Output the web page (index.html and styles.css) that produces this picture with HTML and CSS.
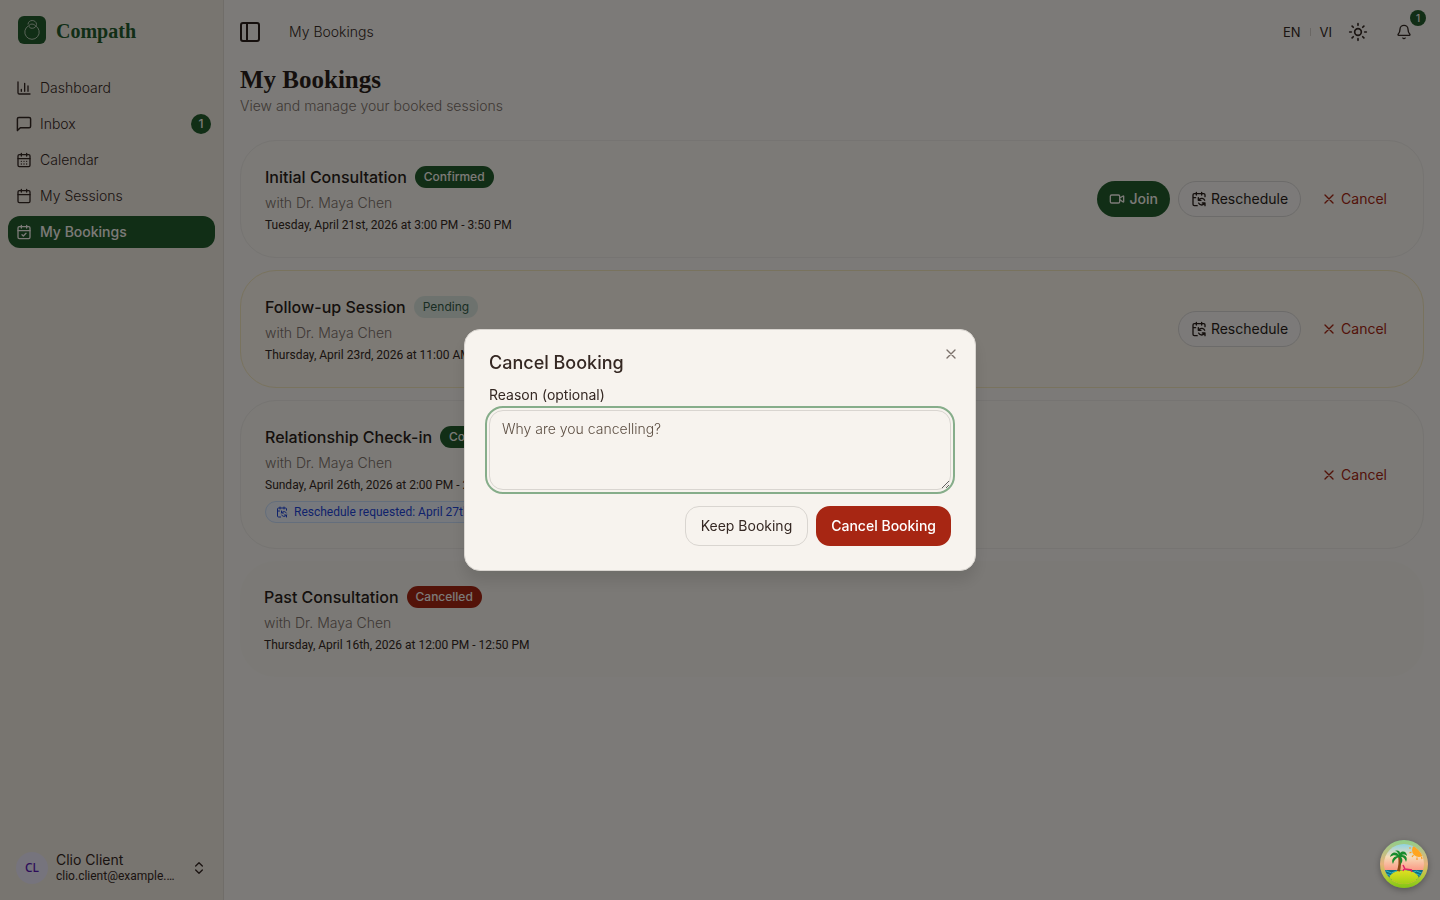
FILE: index.html
```html
<!DOCTYPE html>
<html lang="en">
<head>
    <meta charset="UTF-8">
    <meta name="viewport" content="width=device-width, initial-scale=1.0">
    <title>My Bookings - Compath</title>
    <link rel="stylesheet" href="styles.css">
</head>
<body>
    <!-- icon set -->
    <svg class="sprite" aria-hidden="true">
        <symbol id="i-chart" viewBox="0 0 24 24"><path d="M3 3v16a2 2 0 0 0 2 2h16M18 17V9M13 17V5M8 17v-3"/></symbol>
        <symbol id="i-message" viewBox="0 0 24 24"><path d="M21 15a2 2 0 0 1-2 2H7l-4 4V5a2 2 0 0 1 2-2h14a2 2 0 0 1 2 2z" transform="translate(-1.2 -1.2) scale(1.1)"/></symbol>
        <symbol id="i-calendar" viewBox="0 0 24 24"><path d="M8 2v4M16 2v4M3 10h18"/><rect x="3" y="4" width="18" height="18" rx="2"/></symbol>
        <symbol id="i-calendar-days" viewBox="0 0 24 24"><path d="M8 2v4M16 2v4M3 10h18M8 14h.01M12 14h.01M16 14h.01M8 18h.01M12 18h.01M16 18h.01"/><rect x="3" y="4" width="18" height="18" rx="2"/></symbol>
        <symbol id="i-calendar-check" viewBox="0 0 24 24"><path d="M8 2v4M16 2v4M3 10h18M9 16l2 2 4-4"/><rect x="3" y="4" width="18" height="18" rx="2"/></symbol>
        <symbol id="i-calendar-sync" viewBox="0 0 24 24"><path d="M11 10v4h4M11 14l1.535-1.605a5 5 0 0 1 8 1.5M16 2v4M21 18l-1.535 1.605a5 5 0 0 1-8-1.5M21 22v-4h-4M21 8.5V6a2 2 0 0 0-2-2H5a2 2 0 0 0-2 2v14a2 2 0 0 0 2 2h4.3M3 10h4M8 2v4"/></symbol>
        <symbol id="i-panel" viewBox="0 0 24 24"><rect x="3" y="3" width="18" height="18" rx="2"/><path d="M9 3v18"/></symbol>
        <symbol id="i-video" viewBox="0 0 24 24"><path d="m16 13 5.223 3.482a.5.5 0 0 0 .777-.416V7.87a.5.5 0 0 0-.752-.432L16 10.5"/><rect x="2" y="6" width="14" height="12" rx="2"/></symbol>
        <symbol id="i-x" viewBox="0 0 24 24"><path d="M18 6 6 18M6 6l12 12"/></symbol>
        <symbol id="i-sun" viewBox="0 0 24 24"><circle cx="12" cy="12" r="4"/><path d="M12 2v2M12 20v2M4.93 4.93l1.41 1.41M17.66 17.66l1.41 1.41M2 12h2M20 12h2M6.34 17.66l-1.41 1.41M19.07 4.93l-1.41 1.41"/></symbol>
        <symbol id="i-bell" viewBox="0 0 24 24"><path d="M10.268 21a2 2 0 0 0 3.464 0M3.262 15.326A1 1 0 0 0 4 17h16a1 1 0 0 0 .74-1.673C19.41 13.956 18 12.499 18 8A6 6 0 0 0 6 8c0 4.499-1.411 5.956-2.738 7.326"/></symbol>
        <symbol id="i-chevrons" viewBox="0 0 24 24"><path d="m7 15 5 5 5-5M7 9l5-5 5 5"/></symbol>
    </svg>

    <div class="layout">
        <aside class="sidebar">
            <a class="brand" href="#">
                <svg class="brand-logo" viewBox="0 0 28 28" aria-hidden="true">
                    <rect width="28" height="28" rx="6"/>
                    <path d="M10.500 9.800a7.200 7.200 0 1 0 7 0"/>
                    <path d="M10 8.500c0-2.500 2-4 4.200-4s4.300 1.500 4.300 3.800-2 4-4.300 4c-2 0-3.200-1-3.200-2.200 0-1.300 1.300-2 3-2 1.600 0 2.700.6 3.500 1.700"/>
                </svg>
                <span>Compath</span>
            </a>
            <nav class="menu">
                <a href="#"><svg class="icon"><use href="#i-chart"/></svg>Dashboard</a>
                <a href="#"><svg class="icon"><use href="#i-message"/></svg>Inbox<span class="count">1</span></a>
                <a href="#"><svg class="icon"><use href="#i-calendar-days"/></svg>Calendar</a>
                <a href="#"><svg class="icon"><use href="#i-calendar"/></svg>My Sessions</a>
                <a href="#" class="active"><svg class="icon"><use href="#i-calendar-check"/></svg>My Bookings</a>
            </nav>
            <button class="user" type="button">
                <span class="avatar">CL</span>
                <span class="user-info">
                    <span class="user-name">Clio Client</span>
                    <span class="user-email">clio.client@example.com</span>
                </span>
                <svg class="icon"><use href="#i-chevrons"/></svg>
            </button>
        </aside>

        <main class="main">
            <header class="topbar">
                <button class="toggle" type="button" aria-label="Toggle sidebar"><svg class="icon icon-lg"><use href="#i-panel"/></svg></button>
                <span class="crumb">My Bookings</span>
                <div class="tools">
                    <div class="langs">
                        <button type="button">EN</button>
                        <span class="divider"></span>
                        <button type="button">VI</button>
                    </div>
                    <button class="tool" type="button" aria-label="Theme"><svg class="icon icon-md"><use href="#i-sun"/></svg></button>
                    <button class="tool bell" type="button" aria-label="Notifications"><svg class="icon"><use href="#i-bell"/></svg><span class="bell-count">1</span></button>
                </div>
            </header>

            <h1>My Bookings</h1>
            <p class="subtitle">View and manage your booked sessions</p>

            <div class="bookings">
                <article class="card">
                    <div class="info">
                        <h2>Initial Consultation <span class="badge confirmed">Confirmed</span></h2>
                        <p class="with">with Dr. Maya Chen</p>
                        <p class="date">Tuesday, April 21st, 2026 at 3:00 PM - 3:50 PM</p>
                    </div>
                    <div class="actions">
                        <button class="btn join" type="button"><svg class="icon"><use href="#i-video"/></svg>Join</button>
                        <button class="btn outline" type="button"><svg class="icon"><use href="#i-calendar-sync"/></svg>Reschedule</button>
                        <button class="btn cancel" type="button"><svg class="icon"><use href="#i-x"/></svg>Cancel</button>
                    </div>
                </article>

                <article class="card is-pending">
                    <div class="info">
                        <h2>Follow-up Session <span class="badge pending">Pending</span></h2>
                        <p class="with">with Dr. Maya Chen</p>
                        <p class="date">Thursday, April 23rd, 2026 at 11:00 AM - 11:50 AM</p>
                    </div>
                    <div class="actions">
                        <button class="btn outline" type="button"><svg class="icon"><use href="#i-calendar-sync"/></svg>Reschedule</button>
                        <button class="btn cancel" type="button"><svg class="icon"><use href="#i-x"/></svg>Cancel</button>
                    </div>
                </article>

                <article class="card">
                    <div class="info">
                        <h2>Relationship Check-in <span class="badge confirmed">Confirmed</span></h2>
                        <p class="with">with Dr. Maya Chen</p>
                        <p class="date">Sunday, April 26th, 2026 at 2:00 PM - 2:50 PM</p>
                        <p class="request"><svg class="icon icon-sm"><use href="#i-calendar-sync"/></svg>Reschedule requested: April 27th</p>
                    </div>
                    <div class="actions">
                        <button class="btn cancel" type="button"><svg class="icon"><use href="#i-x"/></svg>Cancel</button>
                    </div>
                </article>

                <article class="card is-past">
                    <div class="info">
                        <h2>Past Consultation <span class="badge cancelled">Cancelled</span></h2>
                        <p class="with">with Dr. Maya Chen</p>
                        <p class="date">Thursday, April 16th, 2026 at 12:00 PM - 12:50 PM</p>
                    </div>
                </article>
            </div>
        </main>
    </div>

    <div class="overlay">
        <form class="dialog" role="dialog" aria-labelledby="dialog-title">
            <h2 id="dialog-title">Cancel Booking</h2>
            <button class="close" type="button" aria-label="Close"><svg class="icon"><use href="#i-x"/></svg></button>
            <div class="field">
                <label for="reason">Reason (optional)</label>
                <textarea id="reason" name="reason" placeholder="Why are you cancelling?"></textarea>
            </div>
            <div class="dialog-actions">
                <button class="keep" type="button">Keep Booking</button>
                <button class="confirm" type="submit">Cancel Booking</button>
            </div>
        </form>
    </div>

    <button class="island" type="button" aria-label="Open devtools">
        <svg viewBox="0 0 48 48" aria-hidden="true">
            <defs>
                <linearGradient id="rim" x1="0" y1="0" x2="0" y2="1">
                    <stop offset="0" stop-color="#8fcf8a"/>
                    <stop offset=".5" stop-color="#e8b27c"/>
                    <stop offset=".8" stop-color="#a9cf2a"/>
                    <stop offset="1" stop-color="#84c414"/>
                </linearGradient>
                <linearGradient id="sky" x1="0" y1="0" x2="0" y2="1">
                    <stop offset="0" stop-color="#6fd0ee"/>
                    <stop offset=".35" stop-color="#f6dcb8"/>
                    <stop offset=".7" stop-color="#fb8a78"/>
                </linearGradient>
                <linearGradient id="sand" x1="0" y1="0" x2="0" y2="1">
                    <stop offset="0" stop-color="#e2e022"/>
                    <stop offset="1" stop-color="#8ecb12"/>
                </linearGradient>
                <clipPath id="scene"><circle cx="24" cy="24" r="20"/></clipPath>
            </defs>
            <circle cx="24" cy="24" r="24" fill="url(#rim)"/>
            <g clip-path="url(#scene)">
                <rect width="48" height="48" fill="url(#sky)"/>
                <circle cx="39" cy="10" r="7" fill="#ffa51f"/>
                <path d="M29 8h2M29.500 13l2-1M32 17l1.500-2M37 20v-2.500M42 19l-.5-2" stroke="#ff9c1a" stroke-width="1.200"/>
                <path d="M4 30h40v10H4z" fill="#0c6f86"/>
                <path d="M4 32q2.500-2 5 0t5 0 5 0 5 0 5 0 5 0 5 0 5 0M4 35q2.500-2 5 0t5 0 5 0 5 0 5 0 5 0 5 0 5 0" fill="none" stroke="#33b6c4"/>
                <ellipse cx="24" cy="39" rx="15" ry="9" fill="url(#sand)"/>
                <path d="M17 31c1.500-5 2-9 1-15l2.500-.5c1 6 .5 11-.5 16z" fill="#8a4a16"/>
                <path d="M19 15c-3-4-8-3-9 2 3-2 5-2 7-1-4 1-6 4-4 8 1-4 3-6 6-7 1 2 2 5 1 8 3-3 3-6 1-8 3 0 4 2 5 5 2-4 0-7-4-7 2-1 4 0 5 1 0-4-4-6-7-3 0-2-2-3-5-2 2 0 3 2 4 4z" fill="#178b2c"/>
                <path d="M23 25l2 4 7 1M24 29l-1 2M31 30l1 2" fill="none" stroke="#e02468" stroke-width="1.500"/>
            </g>
        </svg>
    </button>
</body>
</html>
```

FILE: styles.css
```css
* {
    box-sizing: border-box;
}

body {
    margin: 0;
    font-family: Inter, "Liberation Sans", sans-serif;
    font-size: 14px;
    line-height: 20px;
    font-weight: 300;
    color: #352823;
    background-color: #f8f5f0;
}

h1, h2, p {
    margin: 0;
}

a {
    color: inherit;
    text-decoration: none;
}

button {
    font: inherit;
    color: inherit;
    padding: 0;
    border: none;
    background: none;
    cursor: pointer;
}

.sprite {
    position: absolute;
    width: 0;
    height: 0;
}

.icon {
    width: 16px;
    height: 16px;
    flex-shrink: 0;
    fill: none;
    stroke: currentColor;
    stroke-width: 2;
    stroke-linecap: round;
    stroke-linejoin: round;
}

.icon-sm {
    width: 12px;
    height: 12px;
}

.icon-md {
    width: 20px;
    height: 20px;
}

.icon-lg {
    width: 24px;
    height: 24px;
}

.layout {
    display: flex;
    min-height: 100vh;
}

/* sidebar */
.sidebar {
    width: 224px;
    flex-shrink: 0;
    display: flex;
    flex-direction: column;
    padding: 8px;
    background-color: #f1eae1;
    border-right: 1px solid #e0dad2;
}

.brand {
    display: flex;
    align-items: center;
    gap: 10px;
    height: 44px;
    padding-left: 10px;
    margin-bottom: 20px;
    font-family: "Liberation Serif", serif;
    font-size: 20px;
    font-weight: 700;
    line-height: 24px;
    color: #235c2c;
}

.brand span {
    padding-top: 2px;
}

.brand-logo {
    width: 28px;
    height: 28px;
    fill: none;
    stroke: #b4c8b2;
}

.brand-logo rect {
    fill: #235c2c;
    stroke: none;
}

.menu {
    display: flex;
    flex-direction: column;
    gap: 4px;
}

.menu a {
    display: flex;
    align-items: center;
    gap: 8px;
    height: 32px;
    padding: 0 4px 0 8px;
    border-radius: 12px;
}

.menu .active {
    background-color: #235c2c;
    color: #f8f5f0;
    font-weight: 500;
}

.count {
    width: 20px;
    height: 20px;
    margin-left: auto;
    border-radius: 50%;
    background-color: #235c2c;
    color: #f8f5f0;
    font-size: 12px;
    font-weight: 500;
    text-align: center;
}

.user {
    display: flex;
    align-items: center;
    gap: 8px;
    height: 48px;
    margin-top: auto;
    padding: 0 8px;
    text-align: left;
}

.avatar {
    width: 32px;
    height: 32px;
    flex-shrink: 0;
    border-radius: 50%;
    background-color: #ece8fa;
    color: #5b18b4;
    font-family: "Noto Sans", sans-serif;
    font-size: 12px;
    font-weight: 500;
    line-height: 32px;
    text-align: center;
}

.user-info {
    flex: 1;
    min-width: 0;
    margin-right: 4px;
}

.user-name, .user-email {
    display: block;
    line-height: 16px;
}

.user-name {
    font-weight: 400;
}

.user-email {
    font-family: Roboto, sans-serif;
    font-size: 12px;
    font-weight: 400;
    overflow: hidden;
    text-overflow: ellipsis;
    white-space: nowrap;
}

/* main column */
.main {
    flex: 1;
    min-width: 0;
    padding: 0 16px;
}

.topbar {
    display: flex;
    align-items: center;
    height: 64px;
}

.toggle {
    display: flex;
    margin-left: -2px;
    margin-right: 27px;
    color: #2a1f1a;
}

.tools {
    display: flex;
    align-items: center;
    margin-left: auto;
}

.langs {
    display: flex;
    align-items: center;
    gap: 9px;
    margin-right: 8px;
    font-size: 13px;
    font-weight: 400;
}

.divider {
    width: 1px;
    height: 8px;
    background-color: #d5cec8;
}

.tool {
    display: flex;
    align-items: center;
    justify-content: center;
    width: 36px;
    height: 36px;
}

.bell {
    position: relative;
    margin-left: 10px;
    margin-right: 2px;
}

.bell-count {
    position: absolute;
    top: -4px;
    right: -4px;
    width: 16px;
    height: 16px;
    border-radius: 50%;
    background-color: #235c2c;
    color: #f8f5f0;
    font-size: 10px;
    font-weight: 500;
    line-height: 16px;
    text-align: center;
}

h1 {
    font-family: "Liberation Serif", serif;
    font-size: 25px;
    font-weight: 700;
    line-height: 32px;
    color: #2a1f1a;
}

.subtitle, .with {
    color: #7d716a;
}

.bookings {
    display: flex;
    flex-direction: column;
    gap: 12px;
    margin-top: 24px;
}

.card {
    display: flex;
    align-items: center;
    justify-content: space-between;
    padding: 24px;
    border: 1px solid #ece8e4;
    border-radius: 36px;
    background-color: #f8f5ee;
}

.card.is-pending {
    border-color: #f3e6bd;
    background-color: #faf4ea;
}

.card.is-past {
    border: none;
    background-color: #f6f3ec;
}

.info {
    display: flex;
    flex-direction: column;
    align-items: flex-start;
    gap: 4px;
}

.info h2 {
    display: flex;
    align-items: center;
    gap: 8px;
    font-size: 16px;
    font-weight: 500;
    line-height: 24px;
    color: #2a1f1a;
}

.badge {
    padding: 0 9px;
    border-radius: 11px;
    font-size: 12px;
    font-weight: 500;
    line-height: 22px;
    color: #f8f5f0;
}

.badge.confirmed {
    background-color: #235c2c;
}

.badge.pending {
    background-color: #dbe5dd;
    color: #335a46;
    font-weight: 400;
}

.badge.cancelled {
    background-color: #a72613;
}

.date {
    font-family: Roboto, sans-serif;
    font-size: 12px;
    font-weight: 400;
    line-height: 16px;
}

.request {
    display: flex;
    align-items: center;
    gap: 6px;
    height: 22px;
    margin: 4px 0 1px;
    padding: 0 10px;
    border: 1px solid #c8dcf8;
    border-radius: 11px;
    background-color: #eef3fb;
    color: #1f45d8;
    font-family: Roboto, sans-serif;
    font-size: 12px;
    font-weight: 400;
}

.actions {
    display: flex;
    gap: 8px;
}

.btn {
    display: flex;
    align-items: center;
    gap: 4px;
    height: 36px;
    padding: 0 12px;
    border-radius: 18px;
    font-weight: 400;
}

.btn.join {
    background-color: #235c2c;
    color: #f8f5f0;
    font-weight: 500;
}

.btn.outline {
    border: 1px solid #d9d6d4;
    background-color: #f8f5f3;
    color: #2a1f1a;
}

.btn.cancel {
    color: #a72613;
}

/* dialog */
.overlay {
    position: fixed;
    inset: 0;
    display: flex;
    align-items: center;
    justify-content: center;
    background-color: rgba(0, 0, 0, 0.5);
}

.dialog {
    position: relative;
    display: flex;
    flex-direction: column;
    gap: 16px;
    width: 100%;
    max-width: 512px;
    padding: 24px;
    border: 1px solid #d9d5d0;
    border-radius: 16px;
    background-color: #f7f3ee;
    box-shadow: 0 10px 15px rgba(0, 0, 0, 0.1);
    font-weight: 400;
}

.dialog h2 {
    font-size: 18px;
    font-weight: 500;
    line-height: 18px;
}

.close {
    position: absolute;
    top: 16px;
    right: 16px;
    display: flex;
    color: #7b716b;
}

.field {
    display: flex;
    flex-direction: column;
    gap: 8px;
}

.field label {
    line-height: 14px;
}

.field textarea {
    height: 80px;
    padding: 8px 12px;
    border: 1px solid #d9d5d0;
    border-radius: 14px;
    outline: 2px solid #86ad8a;
    outline-offset: 2px;
    background-color: transparent;
    color: inherit;
    font: inherit;
    font-weight: 300;
    line-height: 20px;
    resize: vertical;
}

.field textarea::placeholder {
    color: #5c4e42;
}

.dialog-actions {
    display: flex;
    justify-content: flex-end;
    gap: 8px;
}

.keep, .confirm {
    height: 40px;
    padding: 0 15px;
    border-radius: 14px;
}

.keep {
    border: 1px solid #d9d5d0;
}

.confirm {
    background-color: #a72613;
    color: #fff;
    font-weight: 500;
}

.island {
    position: fixed;
    right: 12px;
    bottom: 12px;
    width: 48px;
    height: 48px;
    border-radius: 50%;
    box-shadow: 0 2px 6px rgba(0, 0, 0, 0.3);
}

.island svg {
    display: block;
}
```
